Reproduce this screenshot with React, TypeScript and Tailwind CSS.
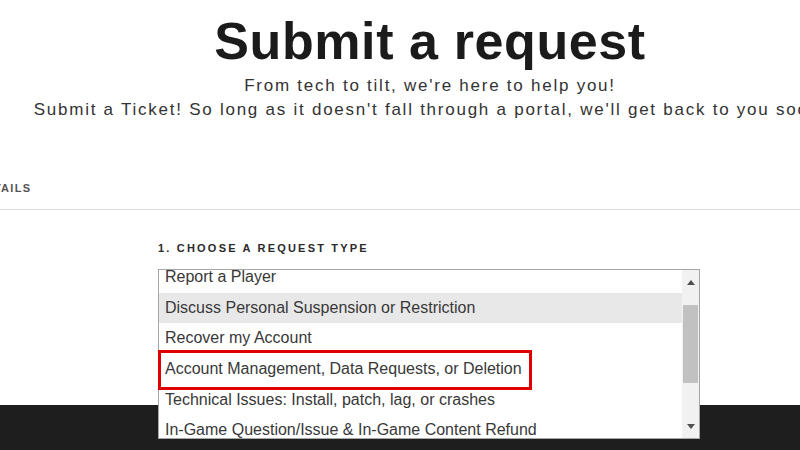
const OPTIONS = [
  'Report a Player',
  'Discuss Personal Suspension or Restriction',
  'Recover my Account',
  'Account Management, Data Requests, or Deletion',
  'Technical Issues: Install, patch, lag, or crashes',
  'In-Game Question/Issue & In-Game Content Refund',
]

export default function App() {
  return (
    <div className="relative h-[450px] w-[800px] overflow-hidden bg-white font-['Liberation_Sans',Arial,sans-serif]">
      {/* header */}
      <div className="flex h-[405px] flex-col">
        <div className="flex flex-col items-center pt-[13px] pl-[60px]">
          <h1 className="text-[52px] leading-[56px] font-bold tracking-[0.6px] whitespace-nowrap text-[#1b1b1b]">
            Submit a request
          </h1>
          <p className="mt-[5px] text-[17px] leading-[24px] tracking-[1.75px] whitespace-nowrap text-[#333]">
            From tech to tilt, we're here to help you!
          </p>
          <p className="text-[17px] leading-[24px] tracking-[1.75px] whitespace-nowrap text-[#333]">
            Submit a Ticket! So long as it doesn't fall through a portal, we'll get back to you soon!
          </p>
        </div>

        {/* tab row */}
        <div className="mt-[58px] border-b border-[#dcdcdc] pb-[13px]">
          <div className="-ml-[24px] text-[11px] leading-[16px] font-bold tracking-[1.3px] whitespace-nowrap text-[#555]">
            DETAILS
          </div>
        </div>

        {/* form */}
        <div className="pt-[30px] pl-[158px]">
          <div className="text-[11px] leading-[16px] font-bold tracking-[2.2px] whitespace-nowrap text-[#2a2a2a]">
            1. CHOOSE A REQUEST TYPE
          </div>
        </div>
      </div>

      {/* footer band */}
      <div className="h-[45px] bg-[#1e1e1e]" />

      {/* open list box */}
      <div className="absolute top-[269px] left-[158px] flex h-[170px] w-[542px] border border-[#a6a6a6] bg-white">
        <div className="flex-1 overflow-hidden">
          <div className="-mt-[8px]">
            {OPTIONS.map((o, i) => (
              <div
                key={o}
                className={
                  'flex h-[30.6px] items-center pl-[6px] text-[16px] whitespace-nowrap text-[#383838] ' +
                  (i === 1 ? 'bg-[#e8e8e8]' : '')
                }
              >
                {o}
              </div>
            ))}
          </div>
        </div>
        <div className="flex w-[17px] flex-col items-center bg-[#f1f1f1]">
          <div className="flex h-[24px] items-center justify-center">
            <svg width="8" height="5" viewBox="0 0 8 5">
              <path d="M0 5 L4 0 L8 5 Z" fill="#505050" />
            </svg>
          </div>
          <div className="mt-[11px] h-[78px] w-[15px] bg-[#c1c1c1]" />
          <div className="mt-auto flex h-[24px] items-center justify-center">
            <svg width="8" height="5" viewBox="0 0 8 5">
              <path d="M0 0 L8 0 L4 5 Z" fill="#505050" />
            </svg>
          </div>
        </div>
      </div>

      {/* highlight annotation */}
      <div className="absolute top-[350px] left-[158px] h-[40px] w-[374px] border-[3px] border-[#e10000]" />
    </div>
  )
}
